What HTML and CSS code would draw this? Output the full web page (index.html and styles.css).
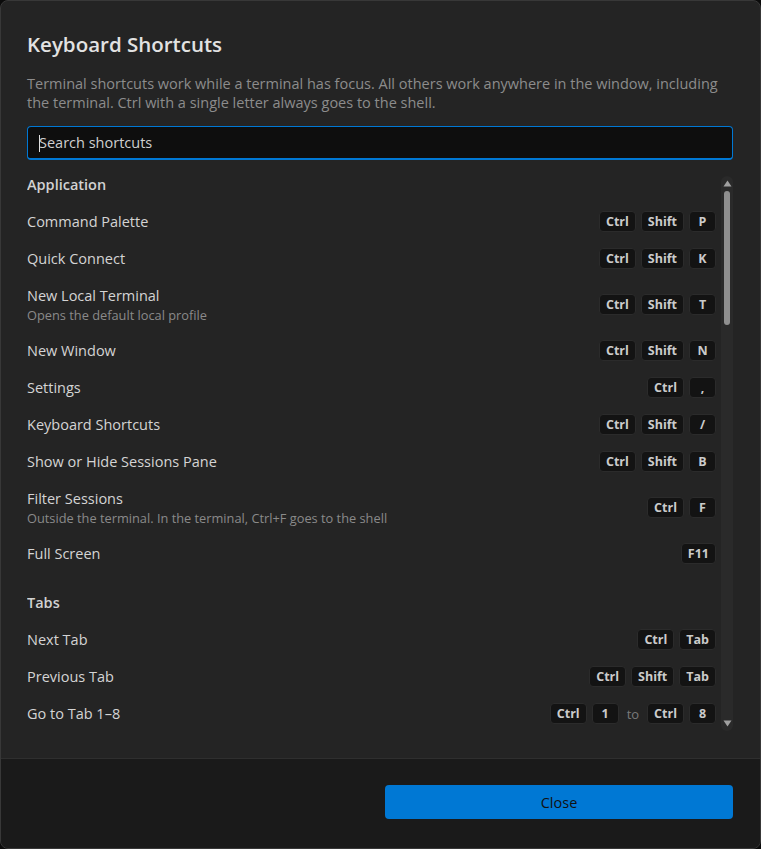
FILE: index.html
```html
<!DOCTYPE html>
<html lang="en">
<head>
<meta charset="UTF-8">
<title>Keyboard Shortcuts</title>
<link rel="stylesheet" href="styles.css">
</head>
<body>
<div class="dialog">

  <div class="dialog-body">
    <h1 class="title">Keyboard Shortcuts</h1>
    <p class="intro">Terminal shortcuts work while a terminal has focus. All others work anywhere in the window, including the terminal. Ctrl with a single letter always goes to the shell.</p>

    <div class="search">
      <input type="text" class="search-input" placeholder="Search shortcuts">
    </div>

    <div class="list-wrap">
      <div class="list">

        <div class="group-title">Application</div>

        <div class="row">
          <div class="label"><div class="name">Command Palette</div></div>
          <div class="keys"><span class="key">Ctrl</span><span class="key">Shift</span><span class="key">P</span></div>
        </div>
        <div class="row">
          <div class="label"><div class="name">Quick Connect</div></div>
          <div class="keys"><span class="key">Ctrl</span><span class="key">Shift</span><span class="key">K</span></div>
        </div>
        <div class="row">
          <div class="label">
            <div class="name">New Local Terminal</div>
            <div class="hint">Opens the default local profile</div>
          </div>
          <div class="keys"><span class="key">Ctrl</span><span class="key">Shift</span><span class="key">T</span></div>
        </div>
        <div class="row">
          <div class="label"><div class="name">New Window</div></div>
          <div class="keys"><span class="key">Ctrl</span><span class="key">Shift</span><span class="key">N</span></div>
        </div>
        <div class="row">
          <div class="label"><div class="name">Settings</div></div>
          <div class="keys"><span class="key">Ctrl</span><span class="key">,</span></div>
        </div>
        <div class="row">
          <div class="label"><div class="name">Keyboard Shortcuts</div></div>
          <div class="keys"><span class="key">Ctrl</span><span class="key">Shift</span><span class="key">/</span></div>
        </div>
        <div class="row">
          <div class="label"><div class="name">Show or Hide Sessions Pane</div></div>
          <div class="keys"><span class="key">Ctrl</span><span class="key">Shift</span><span class="key">B</span></div>
        </div>
        <div class="row">
          <div class="label">
            <div class="name">Filter Sessions</div>
            <div class="hint">Outside the terminal. In the terminal, Ctrl+F goes to the shell</div>
          </div>
          <div class="keys"><span class="key">Ctrl</span><span class="key">F</span></div>
        </div>
        <div class="row">
          <div class="label"><div class="name">Full Screen</div></div>
          <div class="keys"><span class="key">F11</span></div>
        </div>

        <div class="group-title group-gap">Tabs</div>

        <div class="row">
          <div class="label"><div class="name">Next Tab</div></div>
          <div class="keys"><span class="key">Ctrl</span><span class="key">Tab</span></div>
        </div>
        <div class="row">
          <div class="label"><div class="name">Previous Tab</div></div>
          <div class="keys"><span class="key">Ctrl</span><span class="key">Shift</span><span class="key">Tab</span></div>
        </div>
        <div class="row">
          <div class="label"><div class="name">Go to Tab 1–8</div></div>
          <div class="keys"><span class="key">Ctrl</span><span class="key">1</span><span class="to">to</span><span class="key">Ctrl</span><span class="key">8</span></div>
        </div>

      </div>

      <div class="scrollbar">
        <svg class="arrow" width="9" height="7" viewBox="0 0 9 7"><path d="M4.5 0.5 L8.5 6.5 L0.5 6.5 Z" fill="#a0a0a0"/></svg>
        <div class="track"><div class="thumb"></div></div>
        <svg class="arrow" width="9" height="7" viewBox="0 0 9 7"><path d="M0.5 0.5 L8.5 0.5 L4.5 6.5 Z" fill="#a0a0a0"/></svg>
      </div>
    </div>
  </div>

  <div class="dialog-footer">
    <div></div>
    <button class="btn-primary">Close</button>
  </div>

</div>
</body>
</html>
```

FILE: styles.css
```css
* {
  box-sizing: border-box;
}

html, body {
  margin: 0;
  height: 100%;
}

body {
  background-color: #0b0b0b;
  font-family: 'Open Sans', 'Noto Sans', sans-serif;
  color: #d6d6d6;
}

.dialog {
  height: 100%;
  display: flex;
  flex-direction: column;
  background-color: #242424;
  border: 1px solid #383838;
  border-radius: 8px;
  overflow: hidden;
}

.dialog-body {
  flex: 1;
  min-height: 0;
  display: flex;
  flex-direction: column;
  padding: 29px 27px 27px 26px;
}

.title {
  margin: 0;
  font-size: 20.5px;
  line-height: 28px;
  font-weight: 600;
  color: #e2e2e2;
}

.intro {
  margin: 16px 0 14px;
  font-size: 14.5px;
  line-height: 19px;
  color: #8c8c8c;
}

/* search box, drawn focused */
.search {
  position: relative;
}

.search::after {
  content: "";
  position: absolute;
  left: 12px;
  top: 9px;
  width: 1px;
  height: 17px;
  background-color: #e0e0e0;
}

.search-input {
  display: block;
  width: 100%;
  height: 34px;
  padding: 0 11px;
  background-color: #0e0e0e;
  border: 1px solid #0078d4;
  border-bottom-width: 2px;
  border-radius: 4px;
  outline: none;
  font-family: inherit;
  font-size: 14.5px;
  color: #dcdcdc;
}

.search-input::placeholder {
  color: #d0d0d0;
}

/* shortcut list + fake scrollbar */
.list-wrap {
  flex: 1;
  min-height: 0;
  display: flex;
  gap: 5px;
  margin-top: 6px;
}

.list {
  flex: 1;
  overflow: hidden;
}

.group-title {
  height: 37px;
  display: flex;
  align-items: center;
  font-size: 14.5px;
  font-weight: 600;
  color: #d2d2d2;
}

.group-gap {
  margin-top: 12px;
}

.row {
  display: flex;
  align-items: center;
  justify-content: space-between;
  padding: 8px 0;
  min-height: 37px;
}

.name {
  font-size: 14.5px;
  line-height: 21px;
  color: #d4d4d4;
}

.hint {
  font-size: 12.8px;
  line-height: 17px;
  margin-top: 1px;
  color: #8a8a8a;
}

.keys {
  display: flex;
  align-items: center;
  gap: 5px;
}

.key {
  height: 21px;
  min-width: 27px;
  padding: 0 6px;
  display: inline-flex;
  align-items: center;
  justify-content: center;
  background-color: #131313;
  border: 1px solid #2b2b2b;
  border-radius: 4px;
  font-size: 12.5px;
  font-weight: 700;
  color: #cbcbcb;
}

.to {
  padding: 0 3px;
  font-size: 13px;
  color: #7a7a7a;
}

.scrollbar {
  width: 12px;
  margin-top: 10px;
  display: flex;
  flex-direction: column;
  align-items: center;
  padding: 4px 0 4px;
  gap: 4px;
  background-color: #2a2a2a;
  border-radius: 6px;
}

.track {
  flex: 1;
  width: 6px;
}

.thumb {
  width: 6px;
  height: 134px;
  border-radius: 3px;
  background-color: #8f8f8f;
}

.dialog-footer {
  height: 90px;
  flex-shrink: 0;
  display: grid;
  grid-template-columns: 1fr 1fr;
  gap: 10px;
  padding: 26px 27px 0 26px;
  background-color: #1a1a1a;
  border-top: 1px solid #2f2f2f;
}

.btn-primary {
  height: 34px;
  background-color: #0078d4;
  border: none;
  border-radius: 4px;
  font-family: inherit;
  font-size: 14.5px;
  color: #111111;
  cursor: pointer;
}
```
